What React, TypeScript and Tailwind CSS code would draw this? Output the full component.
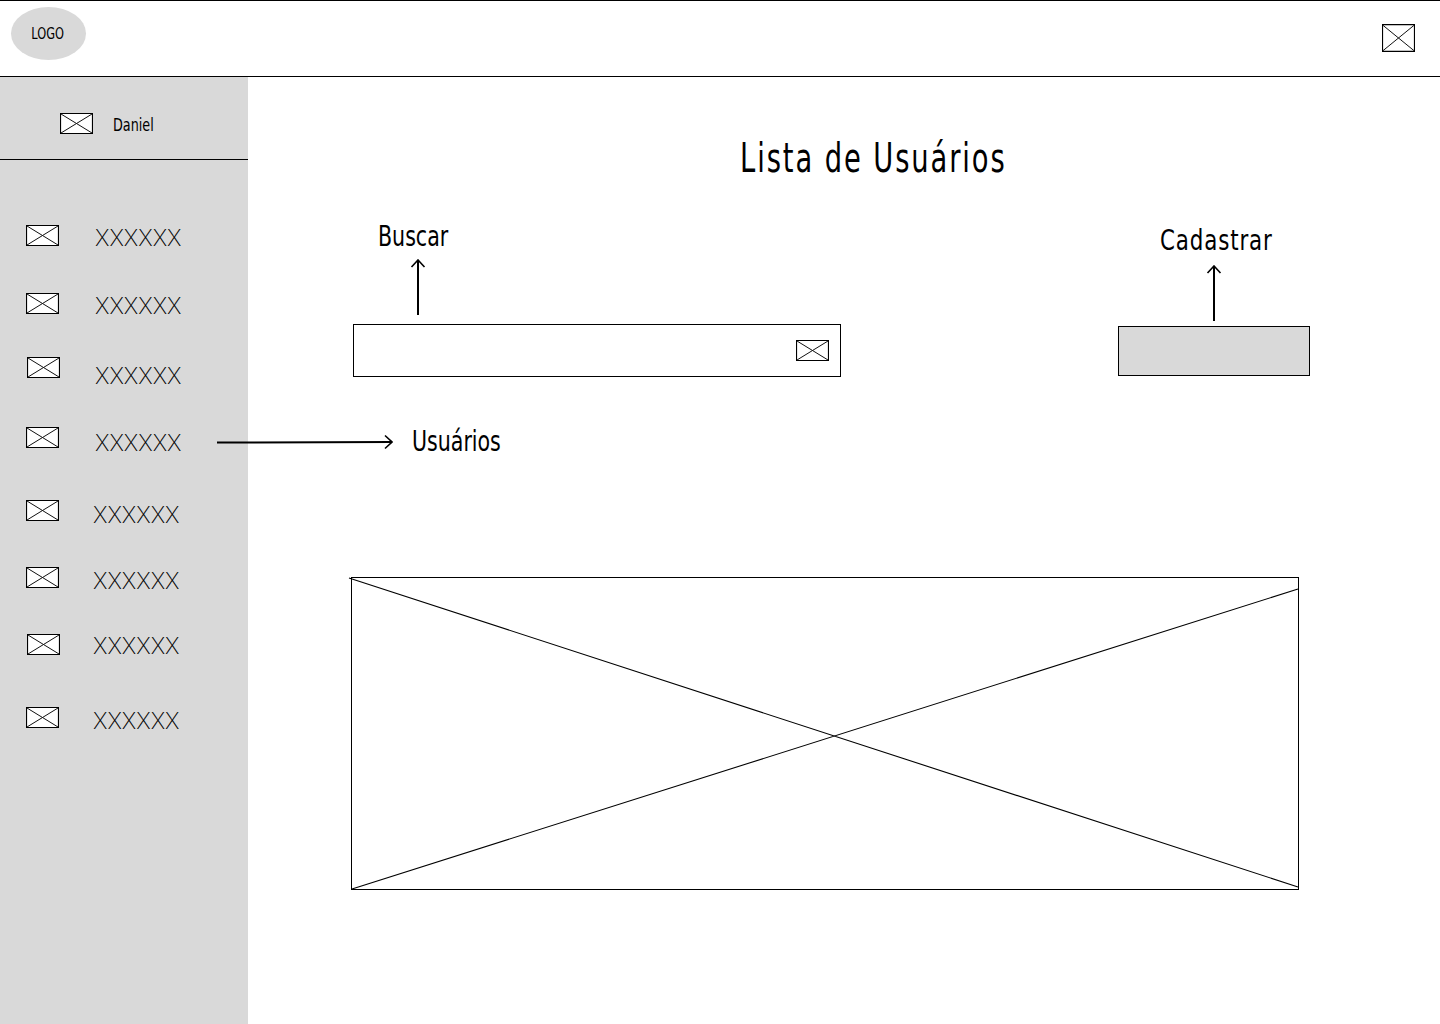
const hand = "font-['DejaVu_Sans_Condensed','DejaVu_Sans',sans-serif] text-black";

function Placeholder({ className = "" }: { className?: string }) {
  return (
    <svg className={`block shrink-0 ${className}`} viewBox="0 0 33 21" preserveAspectRatio="none">
      <rect x="0.5" y="0.5" width="32" height="20" fill="#fff" stroke="#000" strokeWidth="1.2" vectorEffect="non-scaling-stroke" />
      <path d="M1 1 32 20M1 20 32 1" fill="none" stroke="#111" strokeWidth="1" vectorEffect="non-scaling-stroke" />
    </svg>
  );
}

function ArrowUp() {
  return (
    <svg className="block w-[16px] h-[56px]" viewBox="0 0 16 56">
      <path d="M8 56V1" fill="none" stroke="#000" strokeWidth="2" />
      <path d="M1.5 8 8 1l6.5 7" fill="none" stroke="#000" strokeWidth="1.6" />
    </svg>
  );
}

const rows = [
  { row: "mt-[65px] pl-[26px]", gap: "ml-[36px] mt-[2px]" },
  { row: "mt-[47px] pl-[26px]", gap: "ml-[36px] mt-[2px]" },
  { row: "mt-[43px] pl-[27px]", gap: "ml-[35px] mt-[8px]" },
  { row: "mt-[49px] pl-[26px]", gap: "ml-[36px] mt-[5px]" },
  { row: "mt-[52px] pl-[26px]", gap: "ml-[34px] mt-[4px]" },
  { row: "mt-[46px] pl-[26px]", gap: "ml-[34px] mt-[3px]" },
  { row: "mt-[46px] pl-[27px]", gap: "ml-[33px] mt-[1px]" },
  { row: "mt-[52px] pl-[26px]", gap: "ml-[34px] mt-[3px]" },
];

export default function App() {
  return (
    <div className="relative w-[1440px] h-[1024px] overflow-hidden bg-white flex flex-col">
      <header className="h-[77px] shrink-0 border-y border-black flex items-start">
        <div className="ml-[11px] mt-[6px] w-[75px] h-[53px] rounded-[50%] bg-[#d9d9d9] flex items-center justify-center pr-[2px]">
          <span className={`${hand} text-[16px] leading-[20px] scale-x-[0.79]`}>LOGO</span>
        </div>
        <Placeholder className="ml-auto mr-[25px] mt-[23px] w-[33px] h-[28px]" />
      </header>

      <div className="flex flex-1 min-h-0">
        <aside className="w-[248px] shrink-0 bg-[#d9d9d9]">
          <div className="h-[83px] border-b border-black pl-[60px] pt-[36px] flex items-start">
            <Placeholder className="w-[33px] h-[21px]" />
            <span className={`${hand} ml-[20px] text-[18px] leading-[24px] scale-x-[0.79] origin-left`}>Daniel</span>
          </div>
          <nav>
            {rows.map((r, i) => (
              <div key={i} className={`flex items-start h-[21px] ${r.row}`}>
                <Placeholder className="w-[33px] h-[21px]" />
                <span className={`${r.gap} font-['Inter',sans-serif] font-extralight text-[22.5px] leading-[21px] text-black`}>XXXXXX</span>
              </div>
            ))}
          </nav>
        </aside>

        <main className="flex-1 min-w-0">
          <h1 className={`${hand} ml-[492px] mt-[61px] text-[40px] leading-[40px] tracking-[2.5px] font-normal scale-x-[0.76] origin-left`}>Lista de Usuários</h1>

          <div className="flex items-start mt-[44px] ml-[105px]">
            <div className="w-[488px]">
              <div className={`${hand} ml-[25px] mt-[1px] -mb-[1px] text-[28px] leading-[28px] scale-x-[0.816] origin-left`}>Buscar</div>
              <div className="ml-[57px] mt-[9px]"><ArrowUp /></div>
              <div className="mt-[9px] h-[53px] border border-black flex items-center justify-end pr-[11px]">
                <Placeholder className="w-[33px] h-[21px]" />
              </div>
            </div>
            <div className="w-[192px] ml-[277px] mt-[4px]">
              <div className={`${hand} ml-[42px] mt-[1px] -mb-[1px] text-[28px] leading-[28px] tracking-[1px] scale-x-[0.85] origin-left`}>Cadastrar</div>
              <div className="ml-[88px] mt-[11px]"><ArrowUp /></div>
              <div className="mt-[5px] h-[50px] border border-black bg-[#d9d9d9]" />
            </div>
          </div>

          <div className={`${hand} ml-[164px] mt-[51px] -mb-[1px] text-[28px] leading-[28px] scale-x-[0.816] origin-left`}>Usuários</div>

          <svg className="block ml-[103px] mt-[122px] w-[948px] h-[313px] overflow-visible" viewBox="0 0 948 313">
            <rect x="0.5" y="0.5" width="947" height="312" fill="#fff" stroke="#000" />
            <path d="M-2 1 947 310M1 312 947 12" fill="none" stroke="#000" strokeWidth="1.1" />
          </svg>
        </main>
      </div>

      <svg className="absolute left-[217px] top-[434px] w-[176px] h-[16px]" viewBox="0 0 176 16">
        <path d="M0 8.5 175 8" fill="none" stroke="#000" strokeWidth="2" />
        <path d="M168 1.5 175 8l-7 6.5" fill="none" stroke="#000" strokeWidth="1.6" />
      </svg>
    </div>
  );
}
